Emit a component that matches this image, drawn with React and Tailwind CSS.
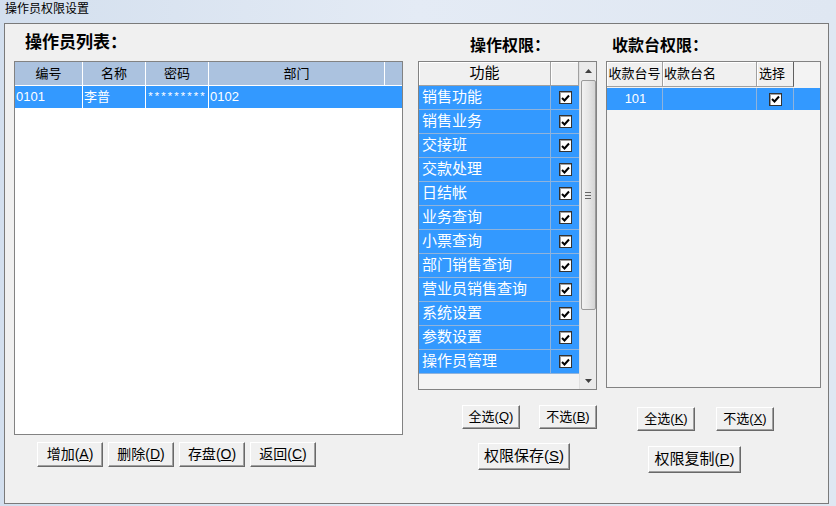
const cjk = "font-['Liberation_Sans','Noto_Sans_CJK_SC',sans-serif]";

const perms = [
  "销售功能",
  "销售业务",
  "交接班",
  "交款处理",
  "日结帐",
  "业务查询",
  "小票查询",
  "部门销售查询",
  "营业员销售查询",
  "系统设置",
  "参数设置",
  "操作员管理",
];

function Check() {
  return (
    <span className="flex h-[13px] w-[13px] items-center justify-center border border-[#333] bg-white shadow-[inset_1px_1px_0_#a0a0a0]">
      <svg width="9" height="8" viewBox="0 0 9 8">
        <path d="M1 4 L3.5 6.5 L8 1.5" stroke="#000" strokeWidth="2" fill="none" />
      </svg>
    </span>
  );
}

function Btn({ label, k, w, h = "h-[24px]", size = "text-[13px]" }) {
  return (
    <button
      type="button"
      className={`${w} ${h} ${size} flex items-center justify-center bg-[#f0f0f0] text-black border border-t-white border-l-white border-b-[#696969] border-r-[#696969] shadow-[inset_-1px_-1px_0_#a0a0a0]`}
    >
      {label}(<u>{k}</u>)
    </button>
  );
}

function Bevel({ children, className = "" }) {
  return (
    <div
      className={`flex items-center border-r border-b border-[#a0a0a0] bg-[#f0f0f0] shadow-[inset_1px_1px_0_#fff] ${className}`}
    >
      {children}
    </div>
  );
}

export default function App() {
  return (
    <div className={`flex h-[506px] w-[836px] flex-col bg-gradient-to-r from-[#d3dfee] via-[#e4ebf5] to-[#dfe7f2] ${cjk}`}>
      <div className="h-[23px] pl-[5px] pt-[1px] text-[12px] leading-[16px] text-black">操作员权限设置</div>

      <div className="ml-[4px] flex h-[481px] w-[825px] border border-[#7a7a7a] bg-[#f0f0f0] pl-[9px]">
        {/* operator list */}
        <div className="flex w-[389px] flex-col">
          <div className="h-[37px] pl-[11px] pt-[9px] text-[17px] font-bold leading-[20px]">操作员列表：</div>
          <div className="flex h-[374px] flex-col border border-[#828282] bg-white text-[13px]">
            <div className="flex h-[23px] bg-[#abc2df] text-black">
              <div className="flex w-[68px] items-center justify-center border-r border-white">编号</div>
              <div className="flex w-[63px] items-center justify-center border-r border-white">名称</div>
              <div className="flex w-[63px] items-center justify-center border-r border-white">密码</div>
              <div className="flex w-[176px] items-center justify-center border-r border-white">部门</div>
              <div className="flex-1" />
            </div>
            <div className="flex h-[23px] border-t border-white bg-[#3399ff] text-white">
              <div className="flex w-[68px] items-center border-r border-white pl-[1px]">0101</div>
              <div className="flex w-[63px] items-center border-r border-white pl-[1px]">李普</div>
              <div className="flex w-[63px] items-center overflow-hidden whitespace-nowrap border-r border-white pl-[1px] font-['Liberation_Mono',monospace] text-[11.5px] tracking-[-0.4px]">*********</div>
              <div className="flex w-[176px] items-center pl-[1px]">0102</div>
              <div className="flex-1 border-l border-[#3399ff]" />
            </div>
          </div>
          <div className="mt-[7px] flex gap-[5px] pl-[23px]">
            <Btn label="增加" k="A" w="w-[66px]" h="h-[25px]" size="text-[14px]" />
            <Btn label="删除" k="D" w="w-[66px]" h="h-[25px]" size="text-[14px]" />
            <Btn label="存盘" k="O" w="w-[66px]" h="h-[25px]" size="text-[14px]" />
            <Btn label="返回" k="C" w="w-[66px]" h="h-[25px]" size="text-[14px]" />
          </div>
        </div>

        {/* operation permissions */}
        <div className="ml-[15px] flex w-[179px] flex-col">
          <div className="h-[37px] pl-[52px] pt-[12px] text-[16px] font-bold leading-[20px]">操作权限：</div>
          <div className="flex h-[329px] border border-[#828282] bg-[#f3f3f3]">
            <div className="flex w-[160px] flex-col">
              <div className="flex h-[24px]">
                <Bevel className="w-[132px] justify-center text-[15px]">功能</Bevel>
                <Bevel className="w-[28px]" />
              </div>
              {perms.map((p) => (
                <div key={p} className="flex h-[24px] border-b border-[#8fb3dc] bg-[#3399ff] text-white">
                  <div className="flex w-[132px] items-center border-r border-[#8fb3dc] pl-[3px] text-[15px]">{p}</div>
                  <div className="flex flex-1 items-center pl-[8px]">
                    <Check />
                  </div>
                </div>
              ))}
            </div>
            <div className="flex w-[17px] flex-col items-center border-l border-[#e0e0e0] bg-[#ebebeb]">
              <div className="flex h-[18px] items-center">
                <svg width="7" height="4" viewBox="0 0 7 4"><path d="M0 4 L3.5 0 L7 4Z" fill="#404040" /></svg>
              </div>
              <div className="flex h-[230px] w-[15px] flex-col items-center justify-center gap-[2px] rounded-[2px] border border-[#9a9a9a] bg-gradient-to-r from-[#f2f2f2] via-[#e6e6e6] to-[#d4d4d4]">
                <span className="h-px w-[6px] bg-[#666]" />
                <span className="h-px w-[6px] bg-[#666]" />
                <span className="h-px w-[6px] bg-[#666]" />
              </div>
              <div className="flex-1" />
              <div className="flex h-[16px] items-center">
                <svg width="7" height="4" viewBox="0 0 7 4"><path d="M0 0 L3.5 4 L7 0Z" fill="#404040" /></svg>
              </div>
            </div>
          </div>
          <div className="mt-[15px] flex gap-[19px] pl-[44px]">
            <Btn label="全选" k="Q" w="w-[58px]" />
            <Btn label="不选" k="B" w="w-[58px]" />
          </div>
          <div className="mt-[14px] pl-[60px]">
            <Btn label="权限保存" k="S" w="w-[92px]" h="h-[27px]" size="text-[15px]" />
          </div>
        </div>

        {/* cash register permissions */}
        <div className="ml-[9px] flex w-[215px] flex-col">
          <div className="h-[37px] pl-[6px] pt-[12px] text-[16px] font-bold leading-[20px]">收款台权限：</div>
          <div className="flex h-[327px] flex-col border border-[#828282] bg-[#f3f3f3] text-[13px]">
            <div className="flex h-[25px]">
              <Bevel className="w-[56px] justify-center">收款台号</Bevel>
              <Bevel className="w-[94px] pl-[1px]">收款台名</Bevel>
              <Bevel className="w-[37px] pl-[2px] border-r-[#606060]">选择</Bevel>
              <div className="flex-1 bg-[#f3f3f3]" />
            </div>
            <div className="flex h-[23px] border-t border-[#f3f3f3] bg-[#3399ff] text-white">
              <div className="flex w-[56px] items-center justify-center border-r border-[#8fb3dc] pl-[2px]">101</div>
              <div className="w-[94px] border-r border-[#8fb3dc]" />
              <div className="flex w-[37px] items-center justify-center border-r border-[#8fb3dc]">
                <Check />
              </div>
              <div className="flex-1" />
            </div>
          </div>
          <div className="mt-[19px] flex gap-[21px] pl-[31px]">
            <Btn label="全选" k="K" w="w-[58px]" />
            <Btn label="不选" k="X" w="w-[58px]" />
          </div>
          <div className="mt-[15px] pl-[42px]">
            <Btn label="权限复制" k="P" w="w-[93px]" h="h-[27px]" size="text-[15px]" />
          </div>
        </div>
      </div>
    </div>
  );
}
